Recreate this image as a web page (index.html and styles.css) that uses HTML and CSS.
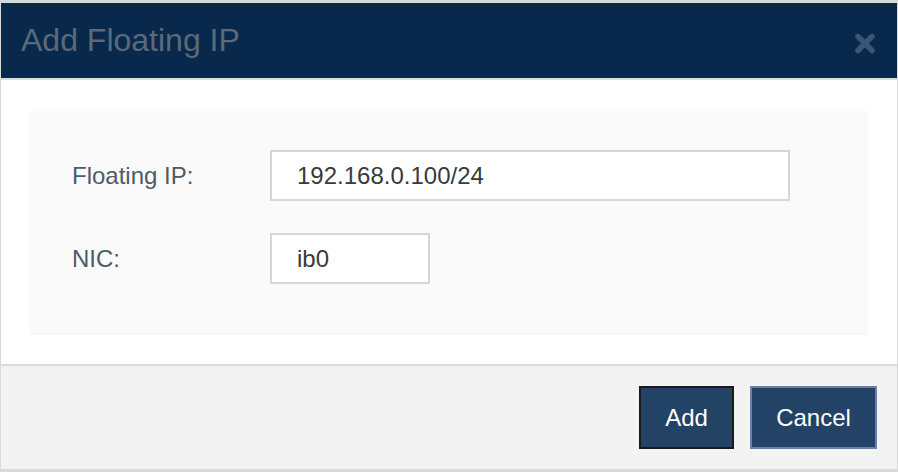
FILE: index.html
```html
<!DOCTYPE html>
<html>
<head>
    <title>Add Floating IP</title>
    <link rel="stylesheet" href="styles.css">
</head>
<body>
    <div class="modal">
        <div class="modal-header">
            <h1>Add Floating IP</h1>
            <span class="close">
                <svg width="20" height="21" viewBox="0 0 20 21">
                    <path d="M3 3.5 L17 17.5 M17 3.5 L3 17.5" stroke="#3a5677" stroke-width="5.5" stroke-linecap="round"/>
                </svg>
            </span>
        </div>

        <div class="modal-body">
            <div class="panel">
                <div class="form-row">
                    <label for="floatingIp">Floating IP:</label>
                    <input type="text" id="floatingIp" class="wide" value="192.168.0.100/24">
                </div>
                <div class="form-row">
                    <label for="nic">NIC:</label>
                    <input type="text" id="nic" class="narrow" value="ib0">
                </div>
            </div>
        </div>

        <div class="modal-footer">
            <button class="btn btn-add">Add</button>
            <button class="btn btn-cancel">Cancel</button>
        </div>
    </div>
</body>
</html>
```

FILE: styles.css
```css
body {
    margin: 0;
    background-color: #ffffff;
    font-family: 'Liberation Sans', Arial, sans-serif;
}

.modal {
    width: 898px;
    height: 472px;
    box-sizing: border-box;
    border: 1px solid #d9d9d9;
    border-top-width: 3px;
    border-bottom-width: 3px;
    display: flex;
    flex-direction: column;
}

.modal-header {
    height: 75px;
    background-color: #08294b;
    border-bottom: 2px solid #dcdcdc;
    display: flex;
    align-items: center;
    justify-content: space-between;
    padding: 0 22px 0 20px;
}

.modal-header h1 {
    margin: 0;
    font-size: 32px;
    font-weight: normal;
    color: #5b6a7a;
}

.close {
    display: flex;
    margin-top: 5px;
}

.modal-body {
    padding: 30px 30px 31px 29px;
    background-color: #ffffff;
}

.panel {
    background-color: #fafafa;
    border-radius: 3px;
    box-shadow: 0 1px 3px rgba(0,0,0,0.07);
    padding: 40px 42px 49px 42px;
    display: flex;
    flex-direction: column;
    gap: 32px;
}

.form-row {
    display: flex;
    align-items: center;
}

.form-row label {
    width: 198px;
    font-size: 24px;
    color: #4f5b67;
}

.form-row input {
    height: 51px;
    box-sizing: border-box;
    border: 2px solid #d6d6d6;
    background-color: #ffffff;
    padding: 0 0 0 25px;
    font-family: 'Liberation Sans', Arial, sans-serif;
    font-size: 24px;
    color: #3a3a3a;
    outline: none;
}

.wide {
    width: 520px;
}

.narrow {
    width: 160px;
}

.modal-footer {
    flex: 1;
    background-color: #f3f3f3;
    border-top: 2px solid #dcdcdc;
    display: flex;
    justify-content: flex-end;
    align-items: flex-start;
    gap: 16px;
    padding: 20px 20px 0 0;
}

.btn {
    height: 63px;
    padding: 0 24px;
    background-color: #224266;
    color: #ffffff;
    font-family: 'Liberation Sans', Arial, sans-serif;
    font-size: 24px;
    border: 2px solid #1a1a1a;
    cursor: pointer;
}

.btn-add {
    width: 95px;
}

.btn-cancel {
    width: 127px;
    border-color: #6b7fa8;
}
```
